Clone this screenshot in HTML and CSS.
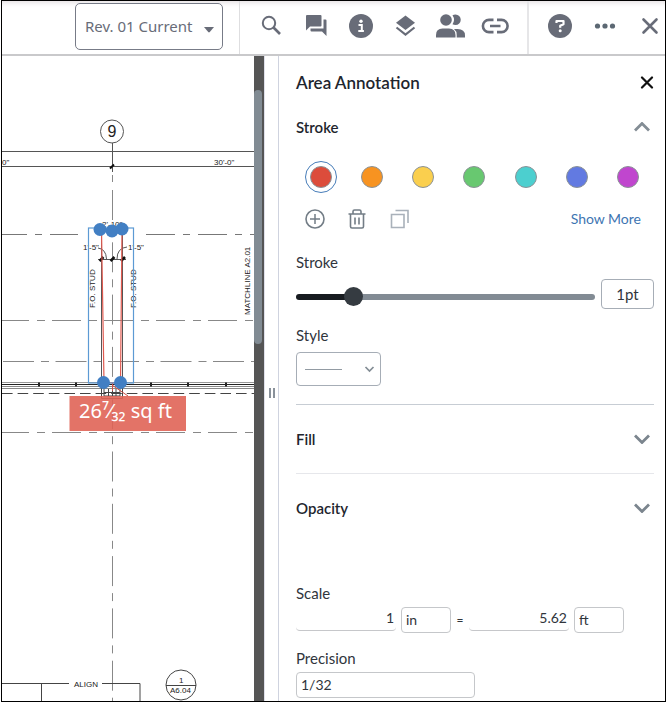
FILE: index.html
```html
<!DOCTYPE html>
<html lang="en">
<head>
<meta charset="utf-8">
<title>Area Annotation</title>
<link rel="stylesheet" href="styles.css">
</head>
<body>
<div class="app">
  <header class="toolbar">
    <div class="toolbar-revision">
      <div class="revision">
        <select class="revision-select" aria-label="Revision"><option>Rev. 01 Current</option></select>
        <svg class="revision-caret" width="10" height="6" viewBox="0 0 10 6"><path d="M0 0h10L5.8 5q-.8.9-1.6 0z" fill="#686c78"/></svg>
      </div>
    </div>
    <nav class="toolbar-tools" aria-label="Tools">
      <button class="tool" aria-label="Search"><svg width="30" height="30" viewBox="0 0 30 30"><circle cx="13" cy="12" r="6.200" fill="none" stroke="#686c78" stroke-width="2"/><path d="M17.500 16.500l6.500 6.500" stroke="#686c78" stroke-width="2.600"/></svg></button>
      <button class="tool" aria-label="Comments"><svg width="30" height="30" viewBox="0 0 30 30" fill="#686c78"><path d="M6 4h13.500q1 0 1 1v9.500q0 1-1 1H9l-4 4V5q0-1 1-1z"/><path d="M22.500 8.500h2q1 0 1 1V25l-4.500-4.500H10.500q-1 0-1-1v-2h13z"/></svg></button>
      <button class="tool" aria-label="Information"><svg width="30" height="30" viewBox="0 0 30 30"><circle cx="15" cy="15" r="12" fill="#686c78"/><circle cx="15" cy="10.300" r="1.700" fill="#fff"/><path d="M12.500 14h3.300v6M12.300 20h5.600" fill="none" stroke="#fff" stroke-width="2"/></svg></button>
      <button class="tool" aria-label="Layers"><svg width="30" height="30" viewBox="0 0 30 30"><path d="M15.500 4.500l9.500 7.300-9.500 7.300-9.500-7.300z" fill="#686c78"/><path d="M6.500 16.500l9 7 9-7" fill="none" stroke="#686c78" stroke-width="2.200"/></svg></button>
      <button class="tool" aria-label="People"><svg width="30" height="30" viewBox="0 0 30 30" fill="#686c78"><circle cx="11" cy="9" r="5.800"/><path d="M1 26.500v-2.500q0-6.500 6.500-6.500h6.500q6.500 0 6.500 6.500v2.500z"/><path d="M17.500 4.200q1.300-.7 3-.7a5.200 5.200 0 0 1 0 10.500q-1.700 0-3-.8 3-4.500 0-9zM19 18h3.500q7.500 0 7.500 6.500v2h-8.300v-2.500q0-4-2.700-6z"/></svg></button>
      <button class="tool" aria-label="Link"><svg width="30" height="30" viewBox="0 0 30 30"><path d="M13.500 8.900H9a6.100 6.100 0 0 0 0 12.200h4.500M17 8.900h4.500a6.100 6.100 0 0 1 0 12.200H17M10 15h10.500" fill="none" stroke="#686c78" stroke-width="2.600"/></svg></button>
    </nav>
    <div class="toolbar-end">
      <button class="tool" aria-label="Help"><svg width="30" height="30" viewBox="0 0 30 30"><circle cx="15" cy="15" r="12" fill="#686c78"/><path d="M11.500 12v-2h7v3.300l-3.300 1.500v2" fill="none" stroke="#fff" stroke-width="2.200" stroke-linejoin="round"/><circle cx="15.200" cy="19.800" r="1.500" fill="#fff"/></svg></button>
      <button class="tool" aria-label="More"><svg width="30" height="30" viewBox="0 0 30 30" fill="#5c6873"><circle cx="7.500" cy="15" r="2.600"/><circle cx="15" cy="15" r="2.600"/><circle cx="22.500" cy="15" r="2.600"/></svg></button>
      <button class="tool" aria-label="Close viewer"><svg width="30" height="30" viewBox="0 0 30 30"><path d="M8.500 8.500l13 13M21.500 8.500l-13 13" stroke="#686c78" stroke-width="2.600" stroke-linecap="round"/></svg></button>
    </div>
  </header>

  <main class="workspace">
    <section class="sheet" aria-label="Drawing">
      <svg class="plan" viewBox="2 56 252 645" preserveAspectRatio="xMidYMin slice" font-family="Liberation Sans, sans-serif" font-size="8" fill="#222">
        <g fill="none" stroke="#555">
          <path d="M2 151.500h252M2 166.500h252M112.500 143v29"/>
          <path d="M112.500 175v7M112.500 190v511" stroke-dasharray="30 7 8 7.300" stroke="#888"/>
          <path d="M-2 234.500h80" stroke-dasharray="29 8 7 8" stroke="#777"/>
          <path d="M146 234.500h108" stroke-dasharray="29 8 7 8" stroke="#777"/>
          <path d="M0 320.500h254M0 432.500h254" stroke-dasharray="29 8 8 7" stroke="#888"/>
          <path d="M3 361.500h251" stroke-dasharray="31 7 8 6.500" stroke="#888"/>
          <path d="M2 393.500h252" stroke-dasharray="10.600 5" stroke="#444"/>
          <path d="M101.500 234v150M122.500 234v150"/>
          <circle cx="112" cy="131.500" r="11.500"/>
        </g>
        <path d="M110 168.500l4-4" stroke="#111" stroke-width="2"/>
        <text x="112" y="137" font-size="16" text-anchor="middle">9</text>
        <text x="2" y="165">0"</text><text x="214" y="165">30'-0"</text>
        <text x="102" y="227">2'-10"</text>
        <text x="83" y="250">1'-5"</text><text x="128" y="250">1'-5"</text>
        <g fill="none" stroke="#555"><path d="M98 248q8 1 8.500 11M127 247q-10 1-10 12M98 259.500h28"/></g>
        <path d="M99.500 261l4-4M110.500 261l4-4M121 261l4-4" stroke="#111" stroke-width="2.500"/>
        <text transform="translate(95 308) rotate(-90)">F.O. STUD</text>
        <text transform="translate(136 308) rotate(-90)">F.O. STUD</text>
        <text transform="translate(250 315) rotate(-90)">MATCHLINE A2.01</text>
        <g fill="none">
          <path d="M2 382.500h252" stroke="#999"/><path d="M2 384.500h252" stroke="#222"/>
          <path d="M2 386.500h252M2 388.500h252" stroke="#888"/>
          <path d="M38 384.500h2M75 384.500h2M150 384.500h2M187 384.500h2M225 384.500h2" stroke="#222" stroke-width="4"/>
          <path d="M101.500 386v12.500h21V386M104 386v10h16v-10M108.500 389v7M112.500 388v8M116 389v7M104 392.500h16" stroke="#444"/>
          <path d="M101.500 230l2.500 152M122 230l-1.500 152M104 382l8.500 1h8" stroke="#e05a50" stroke-width="1.200"/>
          <path d="M112.500 383v8M112 385l16 11" stroke="#cf5147"/>
          <rect x="88.500" y="228" width="45" height="155" stroke="#5c9ad4" stroke-width="1.200"/>
        </g>
        <g fill="#427fc3"><circle cx="100" cy="229.500" r="6.500"/><circle cx="112" cy="231" r="6.500"/><circle cx="122" cy="229" r="6.500"/><circle cx="103.500" cy="382.500" r="6.500"/><circle cx="120.500" cy="382.500" r="6.500"/></g>
        <rect x="69.500" y="396" width="116.500" height="35" fill="#e06457" opacity=".9"/>
        <text x="79" y="418" font-family="Noto Sans, sans-serif" font-size="20" fill="#fff">26⁷⁄₃₂ sq ft</text>
        <g fill="none" stroke="#444"><path d="M2 683.500h67M102 683.500h38V701M41.500 683.500V701"/><circle cx="181" cy="685" r="15"/><path d="M166 685.500h30"/></g>
        <text x="74" y="687">ALIGN</text><text x="179" y="683">1</text><text x="170" y="693">A6.04</text>
      </svg>
      <div class="scrollbar"><div class="scrollbar-thumb"></div></div>
    </section>
    <div class="splitter"><span class="splitter-grip"></span></div>

    <aside class="panel">
      <div class="row panel-head">
        <h1 class="panel-title">Area Annotation</h1>
        <button class="icon-button" aria-label="Close panel"><svg width="14" height="14" viewBox="0 0 14 14"><path d="M2 1.500l10 10M12 1.500l-10 10" stroke="#111" stroke-width="2.200" stroke-linecap="round"/></svg></button>
      </div>
      <div class="row stroke-head">
        <h2 class="section-title">Stroke</h2>
        <button class="icon-button chevron" aria-label="Collapse stroke"><svg width="16" height="10" viewBox="0 0 16 10"><path d="M1 8.500l7-7 7 7" fill="none" stroke="#838d95" stroke-width="2.800"/></svg></button>
      </div>
      <div class="swatches">
        <button class="swatch selected red" aria-label="Red"></button>
        <button class="swatch orange" aria-label="Orange"></button>
        <button class="swatch yellow" aria-label="Yellow"></button>
        <button class="swatch green" aria-label="Green"></button>
        <button class="swatch teal" aria-label="Teal"></button>
        <button class="swatch blue" aria-label="Blue"></button>
        <button class="swatch purple" aria-label="Purple"></button>
      </div>
      <div class="row color-actions">
        <div class="action-group">
          <button class="icon-button" aria-label="Add colour"><svg width="20" height="20" viewBox="0 0 20 20"><path d="M10 5v10M5 10h10" stroke="#737d86" stroke-width="1.500"/><circle cx="10" cy="10" r="9" fill="none" stroke="#737d86" stroke-width="1.600"/></svg></button>
          <button class="icon-button" aria-label="Delete colour"><svg width="20" height="20" viewBox="0 0 20 20"><path d="M1.500 5h17M6 5V2.500Q6 1 7.500 1h5Q14 1 14 2.500V5M3.500 5v12.500q0 1.500 1.500 1.500h10q1.500 0 1.500-1.500V5M8 8.500v7M12 8.500v7" fill="none" stroke="#737d86" stroke-width="1.600"/></svg></button>
          <button class="icon-button" aria-label="Copy colour"><svg width="20" height="20" viewBox="0 0 20 20"><path d="M2.500 5.500h12.500v13H2.500zM6.500 1.500h12.500V14" fill="none" stroke="#a9b1ba" stroke-width="1.600"/></svg></button>
        </div>
        <a class="show-more" href="#">Show More</a>
      </div>
      <label class="field-label stroke-label" for="stroke-range">Stroke</label>
      <div class="slider-row">
        <input class="slider" id="stroke-range" type="range" min="0" max="100" value="17">
        <input class="slider-value" type="text" value="1pt" aria-label="Stroke width">
      </div>
      <label class="field-label style-label" for="line-style">Style</label>
      <div class="line-style">
        <select class="line-select" id="line-style"><option aria-label="Solid"></option></select>
        <svg class="line-preview" width="70" height="10" viewBox="0 0 70 10"><path d="M0 5.500h37" stroke="#929ba3"/><path d="M60.500 3l4 4 4-4" fill="none" stroke="#838d95" stroke-width="1.700"/></svg>
      </div>
      <div class="row section">
        <h2 class="section-title">Fill</h2>
        <button class="icon-button chevron" aria-label="Expand fill"><svg width="16" height="10" viewBox="0 0 16 10"><path d="M1 1.500l7 7 7-7" fill="none" stroke="#7b858e" stroke-width="2.800"/></svg></button>
      </div>
      <div class="row section section-light">
        <h2 class="section-title">Opacity</h2>
        <button class="icon-button chevron" aria-label="Expand opacity"><svg width="16" height="10" viewBox="0 0 16 10"><path d="M1 1.500l7 7 7-7" fill="none" stroke="#7b858e" stroke-width="2.800"/></svg></button>
      </div>
      <label class="field-label scale-label" for="scale-from">Scale</label>
      <div class="scale-row">
        <input class="scale-input" id="scale-from" type="text" value="1">
        <select class="box-select unit" aria-label="Drawing unit"><option>in</option></select>
        <span class="equals">=</span>
        <input class="scale-input" type="text" value="5.62" aria-label="Real length">
        <select class="box-select unit" aria-label="Real unit"><option>ft</option></select>
      </div>
      <label class="field-label precision-label" for="precision">Precision</label>
      <select class="box-select precision" id="precision"><option>1/32</option></select>
    </aside>
  </main>
</div>
</body>
</html>
```
FILE: styles.css
```css
* { box-sizing: border-box; }
body { margin: 0; background: #fff; color: #30353c; font-family: Lato, "Liberation Sans", sans-serif; font-size: 15px; line-height: 20px; }
button, input, select { margin: 0; padding: 0; font: inherit; color: inherit; background: none; border: 0; appearance: none; }
button svg { display: block; }
h1, h2 { margin: 0; }

.app { display: flex; flex-direction: column; height: 100vh; margin-left: 1px; border: 1px solid #000; overflow: hidden; }

.toolbar { display: grid; grid-template-columns: 237fr 288fr 138fr; flex: none; height: 55px; border-bottom: 2px solid #c9c9cb; box-shadow: inset 0 6px 5px -4px #e6e1e4; }
.toolbar-revision { display: flex; justify-content: flex-end; padding: 2px 16px 4px 0; }
.revision { position: relative; width: 148px; }
.revision-select { width: 100%; height: 47px; padding: 0 8px 2px 9px; border: 1px solid #777b87; border-radius: 5px; background: #fff; color: #686c78; font-family: "Noto Sans", sans-serif; font-size: 15px; }
.revision-caret { position: absolute; right: 9px; top: 24px; pointer-events: none; }
.toolbar-tools, .toolbar-end { display: flex; justify-content: space-between; align-items: center; padding: 0 17px 4px 16px; border-left: 1px solid #dedee0; }
.toolbar-end { padding: 0 0 4px 16px; border-left: 2px solid #e6e6e8; }

.workspace { display: grid; grid-template-columns: minmax(0, 262fr) 15px minmax(0, 386fr); flex: 1; min-height: 0; }
.sheet { display: grid; grid-template-columns: minmax(0, 1fr) 10px; min-height: 0; }
.plan { width: 100%; height: 100%; min-height: 0; }
.scrollbar { padding: 34px 2px 0 0; background: #555; }
.scrollbar-thumb { height: 41.5%; border-radius: 4px; background: #818b93; }
.splitter { display: flex; align-items: center; justify-content: center; padding-top: 28px; border-right: 1px solid #cfd3df; border-left: 1px solid #dfe0ea; }
.splitter-grip { width: 6px; height: 10px; border: solid #89919a; border-width: 0 2px; }

.panel { min-width: 0; padding: 0 11px 0 17px; overflow: hidden; }
.row { display: flex; align-items: center; justify-content: space-between; }
.panel-head { padding-top: 17px; }
.panel-title { font-size: 17px; font-weight: 600; line-height: 20px; color: #1e252e; }
.section-title { font-size: 15px; font-weight: 600; line-height: 20px; color: #1e252e; }
.stroke-head { margin-top: 24px; }
.chevron { margin-right: 4px; }
.swatches { display: flex; justify-content: space-between; margin: 24px 10px 0 9px; }
.swatch { display: grid; place-items: center; width: 32px; height: 32px; border: 1px solid transparent; border-radius: 50%; }
.swatch::before { content: ""; width: 20px; height: 20px; border: 1px solid #8b9297; border-radius: 50%; background: currentColor; }
.selected { border-color: #477db9; }
.red { color: #dc4c3b; }
.orange { color: #f79321; }
.yellow { color: #facf4e; }
.green { color: #68c870; }
.teal { color: #4ccfcf; }
.blue { color: #627ae1; }
.purple { color: #c046ce; }
.color-actions { margin: 16px 13px 0 9px; }
.action-group { display: flex; gap: 22px; }
.show-more { color: #3e75b2; font-size: 14px; text-decoration: none; }
.field-label { display: block; font-size: 15px; line-height: 20px; }
.stroke-label { margin-top: 23px; }
.slider-row { display: flex; align-items: center; gap: 6px; margin-top: 7px; }
.slider { flex: 1; min-width: 0; height: 24px; padding-top: 5px; }
.slider::-webkit-slider-runnable-track { height: 6px; border-radius: 3px; background: linear-gradient(90deg, #171b20 19%, #828b94 19%); }
.slider::-webkit-slider-thumb { appearance: none; width: 19px; height: 19px; margin-top: -7px; border-radius: 50%; background: #353b41; }
.slider-value { width: 53px; height: 30px; border: 1px solid #a6adb6; border-radius: 4px; text-align: center; font-size: 15px; }
.style-label { margin-top: 16px; }
.line-style { position: relative; width: 85px; height: 34px; margin: 7px 0 18px; }
.line-select { display: block; width: 100%; height: 100%; border: 1px solid #a6adb6; border-radius: 4px; }
.line-preview { position: absolute; left: 9px; top: 12px; pointer-events: none; }
.section { padding: 24px 0; border-top: 1px solid #c7cdd4; }
.section-light { border-color: #e6e7eb; }
.scale-label { margin-top: 41px; }
.scale-row { display: flex; align-items: center; margin: 4px 30px 0 0; }
.scale-input { flex: 1; min-width: 0; height: 22px; padding: 0 2px 4px; border-bottom: 1px solid #c6c7ca; border-radius: 4px; text-align: right; font-size: 14px; }
.box-select { height: 26px; padding-left: 4px; border: 1px solid #c5c7ca; border-radius: 4px; font-size: 14px; }
.unit { width: 50px; margin-left: 5px; }
.equals { width: 18px; text-align: center; font-size: 12px; }
.precision-label { margin-top: 15px; }
.precision { display: block; width: 50%; margin-top: 4px; }
```
